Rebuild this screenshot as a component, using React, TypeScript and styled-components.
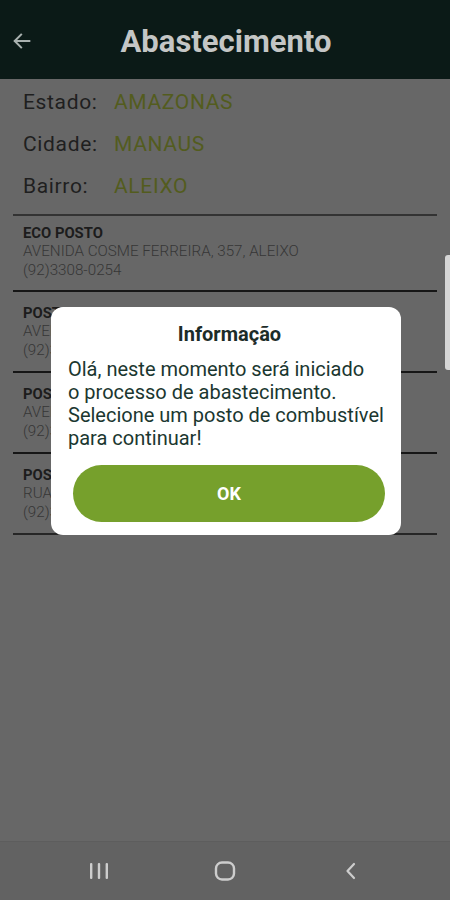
import React from "react";
import styled, { createGlobalStyle } from "styled-components";

const Global = createGlobalStyle`
  html, body { margin: 0; padding: 0; }
  body { font-family: Roboto, "Liberation Sans", sans-serif; background: #676767; }
  #root { height: 900px; }
`;

const Page = styled.div`
  width: 450px;
  height: 900px;
  display: flex;
  flex-direction: column;
  background: #676767;
  overflow: hidden;
`;

const Header = styled.header`
  height: 79px;
  flex: none;
  background: #0b1a17;
  display: grid;
  grid-template-columns: 50px 1fr 50px;
  align-items: center;
`;

const BackButton = styled.div`
  display: flex;
  align-items: center;
  justify-content: center;
  padding-right: 6px;
  padding-top: 2px;
`;

const Title = styled.h1`
  margin: 0;
  text-align: center;
  font-family: Roboto, sans-serif;
  font-weight: 700;
  font-size: 31px;
  color: #c4c6c5;
  padding-top: 3px;
  padding-left: 2px;
`;

const Content = styled.main`
  flex: 1;
  display: flex;
  flex-direction: column;
  padding-top: 2px;
`;

const InfoRow = styled.div`
  height: 42px;
  display: flex;
  align-items: center;
  padding-left: 23px;
  font-size: 21px;
  letter-spacing: 0.65px;
`;

const Label = styled.span`
  width: 91px;
  color: #1f1f1f;
`;

const Value = styled.span`
  color: #535c1e;
`;

const List = styled.ul`
  list-style: none;
  margin: 7px 13px 0;
  padding: 0;
`;

const Item = styled.li<{ $line: string }>`
  border-top: 2px solid ${(p) => p.$line};
  padding: 12px 10px 12px;
  display: flex;
  flex-direction: column;
  &:first-child {
    padding-top: 8px;
    padding-bottom: 11px;
  }
  &:last-child {
    border-bottom: 2px solid #262626;
  }
`;

const ItemName = styled.span`
  font-size: 14.8px;
  font-weight: 700;
  line-height: 18px;
  color: #1c1c1c;
`;

const ItemLine = styled.span`
  font-size: 15.2px;
  font-weight: 300;
  line-height: 18.5px;
  color: #363636;
`;

const NavBar = styled.nav`
  height: 58px;
  flex: none;
  background: #626262;
  border-top: 1px solid #5d5d5d;
  display: grid;
  grid-template-columns: repeat(3, 126px);
  justify-content: center;
  align-items: center;
  justify-items: center;
`;

const Scrollbar = styled.div`
  position: fixed;
  right: 0;
  top: 255px;
  width: 5px;
  height: 115px;
  background: #d6d6d6;
  border-radius: 3px 0 0 3px;
`;

const Backdrop = styled.div`
  position: fixed;
  inset: 0;
  display: flex;
  justify-content: center;
  align-items: flex-start;
  padding-top: 307px;
  padding-left: 2px;
`;

const Dialog = styled.div`
  width: 350px;
  height: 228px;
  box-sizing: border-box;
  background: #ffffff;
  border-radius: 12px;
  padding: 14px 16px 13px 17px;
  display: flex;
  flex-direction: column;
`;

const DialogTitle = styled.h2`
  margin: 0;
  padding-left: 6px;
  text-align: center;
  font-size: 20px;
  line-height: 26px;
  font-weight: 700;
  color: #1c2c28;
`;

const DialogText = styled.p`
  margin: 11px 0 0;
  font-size: 20px;
  line-height: 23px;
  color: #1b3730;
`;

const OkButton = styled.button`
  margin: auto 0 0 5px;
  height: 57px;
  border: none;
  border-radius: 29px;
  background: #76a02c;
  color: #ffffff;
  font-family: Roboto, sans-serif;
  font-weight: 700;
  font-size: 18px;
`;

const items = [
  { name: "ECO POSTO", addr: "AVENIDA COSME FERREIRA, 357, ALEIXO", phone: "(92)3308-0254", line: "#333333" },
  { name: "POSTO ALEIXO", addr: "AVENIDA ANDRE ARAUJO, 1200, ALEIXO", phone: "(92)3611-2040", line: "#161616" },
  { name: "POSTO SHELL", addr: "AVENIDA DJALMA BATISTA, 450, ALEIXO", phone: "(92)3234-5566", line: "#161616" },
  { name: "POSTO IPIRANGA", addr: "RUA PARA, 85, ALEIXO", phone: "(92)3584-1122", line: "#161616" },
];

export default function App() {
  return (
    <>
      <Global />
      <Page>
        <Header>
          <BackButton>
            <svg width="22" height="22" viewBox="0 0 24 24" fill="none" stroke="#a9b1af" strokeWidth="2.2" strokeLinecap="square">
              <path d="M20 12H4.5" />
              <path d="M11 5l-7 7 7 7" />
            </svg>
          </BackButton>
          <Title>Abastecimento</Title>
          <div />
        </Header>
        <Content>
          <InfoRow>
            <Label>Estado:</Label>
            <Value>AMAZONAS</Value>
          </InfoRow>
          <InfoRow>
            <Label>Cidade:</Label>
            <Value>MANAUS</Value>
          </InfoRow>
          <InfoRow>
            <Label>Bairro:</Label>
            <Value>ALEIXO</Value>
          </InfoRow>
          <List>
            {items.map((it) => (
              <Item key={it.name} $line={it.line}>
                <ItemName>{it.name}</ItemName>
                <ItemLine>{it.addr}</ItemLine>
                <ItemLine>{it.phone}</ItemLine>
              </Item>
            ))}
          </List>
        </Content>
        <NavBar>
          <svg width="22" height="18" viewBox="0 0 22 18" fill="#cdcdcd">
            <rect x="2" y="1" width="2.4" height="16" rx="1" />
            <rect x="9.8" y="1" width="2.4" height="16" rx="1" />
            <rect x="17.6" y="1" width="2.4" height="16" rx="1" />
          </svg>
          <svg width="24" height="24" viewBox="0 0 24 24" fill="none" stroke="#cdcdcd" strokeWidth="2.4">
            <rect x="3" y="3.5" width="18" height="17" rx="6" />
          </svg>
          <svg width="20" height="20" viewBox="0 0 20 20" fill="none" stroke="#cdcdcd" strokeWidth="2.2" strokeLinecap="round" strokeLinejoin="round">
            <path d="M13 3l-6.5 7 6.5 7" />
          </svg>
        </NavBar>
      </Page>
      <Scrollbar />
      <Backdrop>
        <Dialog>
          <DialogTitle>Informação</DialogTitle>
          <DialogText>
            Olá, neste momento será iniciado
            <br />o processo de abastecimento.
            <br />Selecione um posto de combustível
            <br />para continuar!
          </DialogText>
          <OkButton>OK</OkButton>
        </Dialog>
      </Backdrop>
    </>
  );
}
